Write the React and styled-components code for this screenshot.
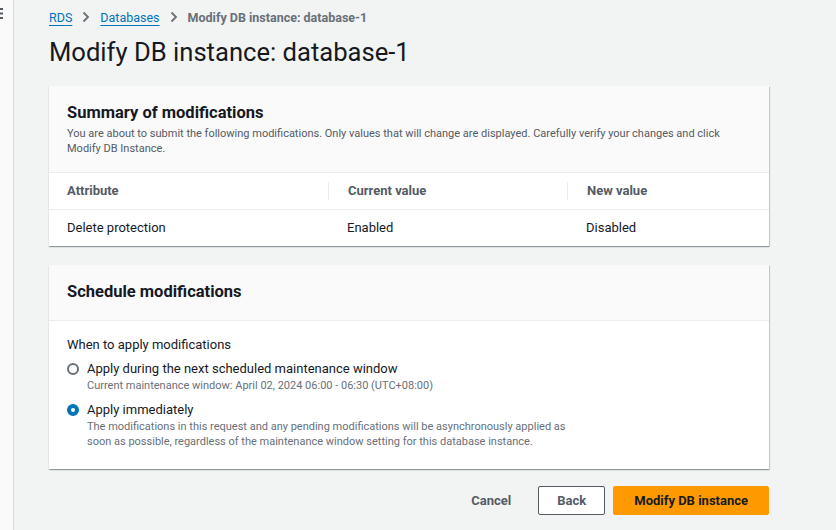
import React, { useState } from "react";
import styled, { createGlobalStyle } from "styled-components";

const GlobalStyle = createGlobalStyle`
	body {
		margin: 0;
		background: #f2f3f3;
		font-family: Roboto, "Liberation Sans", sans-serif;
		color: #16191f;
	}
`;

const Layout = styled.div`
	display: flex;
	min-height: 530px;
`;

const Rail = styled.aside`
	width: 13px;
	border-right: 1px solid #d5dbdb;
	background: #fafafa;
	padding-top: 5px;
	color: #545b64;
`;

const Main = styled.main`
	padding: 8px 0 16px 35px;
	width: 720px;
`;

const Crumbs = styled.nav`
	display: flex;
	align-items: center;
	gap: 10px;
	font-size: 12.5px;
	height: 18px;
`;

const CrumbLink = styled.a`
	color: #0073bb;
	text-decoration: underline;
	text-underline-offset: 3px;
`;

const CrumbCurrent = styled.span`
	color: #687078;
	font-weight: 700;
`;

const Title = styled.h1`
	margin: 10px 0 18px;
	font-size: 25.6px;
	font-weight: 400;
	line-height: 32px;
`;

const Panel = styled.section`
	background: #fff;
	box-shadow: 0 1px 1px 0 rgba(0, 28, 36, 0.3), 1px 1px 1px 0 rgba(0, 28, 36, 0.15);
	margin-bottom: 19px;
`;

const PanelHeader = styled.header`
	background: #fafafa;
	border-bottom: 1px solid #eaeded;
	padding: ${(p) => (p.$compact ? "16px 18px 17px" : "16px 18px 16px")};
`;

const PanelTitle = styled.h2`
	margin: 0;
	font-size: 16.5px;
	font-weight: 700;
	line-height: 22px;
`;

const PanelDesc = styled.p`
	margin: 2px 0 0;
	font-size: 11px;
	line-height: 15px;
	color: #545b64;
`;

const Row = styled.div`
	display: grid;
	grid-template-columns: 279px 239px 1fr;
	height: 36px;
	align-items: center;
	border-bottom: ${(p) => (p.$head ? "1px solid #eaeded" : "none")};
	font-size: 13px;
	font-weight: ${(p) => (p.$head ? 700 : 400)};
	color: ${(p) => (p.$head ? "#545b64" : "#16191f")};
`;

const Cell = styled.div`
	padding-left: ${(p) => (p.$first ? "18px" : "19px")};
	border-left: ${(p) => (p.$head && !p.$first ? "1px solid #eaeded" : "none")};
	line-height: 18px;
`;

const PanelBody = styled.div`
	padding: 15px 18px 20px;
`;

const FieldLabel = styled.div`
	font-size: 13px;
	line-height: 18px;
	margin-bottom: 6px;
`;

const Option = styled.label`
	display: grid;
	grid-template-columns: 20px 1fr;
	margin-bottom: 8px;
	cursor: pointer;

	&:last-child {
		margin-bottom: 0;
	}
`;

const Dot = styled.span`
	width: 12px;
	height: 12px;
	margin-top: 3px;
	border-radius: 50%;
	box-sizing: border-box;
	border: ${(p) => (p.$on ? "4px solid #0073bb" : "2px solid #687078")};
	background: #fff;
`;

const OptionText = styled.span`
	font-size: 13px;
	line-height: 18px;
`;

const OptionHint = styled.span`
	display: block;
	font-size: 11px;
	line-height: 15px;
	color: #687078;
	max-width: 490px;
`;

const Actions = styled.div`
	display: flex;
	justify-content: flex-end;
	align-items: center;
	gap: 8px;
	margin-top: -2px;
`;

const Button = styled.button`
	font-family: inherit;
	font-size: 13px;
	font-weight: 700;
	height: 29px;
	border-radius: 2px;
	padding: 0 ${(p) => (p.$variant === "primary" ? "20px" : "18px")};
	cursor: pointer;
	border: 1px solid
		${(p) => (p.$variant === "primary" ? "#ff9900" : p.$variant === "link" ? "transparent" : "#545b64")};
	background: ${(p) => (p.$variant === "primary" ? "#ff9900" : p.$variant === "link" ? "transparent" : "#fff")};
	color: ${(p) => (p.$variant === "primary" ? "#16191f" : "#545b64")};
`;

const Chevron = () => (
	<svg width="8" height="12" viewBox="0 0 8 12" fill="none">
		<path d="M1.5 1.5 6 6l-4.5 4.5" stroke="#687078" strokeWidth="1.8" />
	</svg>
);

const Dots = () => (
	<svg width="4" height="12" viewBox="0 0 4 12">
		<rect x="0" y="0" width="3" height="2" fill="#545b64" />
		<rect x="0" y="4.5" width="3" height="2" fill="#545b64" />
		<rect x="0" y="9" width="3" height="2" fill="#545b64" />
	</svg>
);

const App = () => {
	const [when, setWhen] = useState("now");

	return (
		<>
			<GlobalStyle />
			<Layout>
				<Rail>
					<Dots />
				</Rail>
				<Main>
					<Crumbs>
						<CrumbLink>RDS</CrumbLink>
						<Chevron />
						<CrumbLink>Databases</CrumbLink>
						<Chevron />
						<CrumbCurrent>Modify DB instance: database-1</CrumbCurrent>
					</Crumbs>
					<Title>Modify DB instance: database-1</Title>

					<Panel>
						<PanelHeader>
							<PanelTitle>Summary of modifications</PanelTitle>
							<PanelDesc>
								You are about to submit the following modifications. Only values that will change are
								displayed. Carefully verify your changes and click Modify DB Instance.
							</PanelDesc>
						</PanelHeader>
						<Row $head>
							<Cell $head $first>Attribute</Cell>
							<Cell $head>Current value</Cell>
							<Cell $head>New value</Cell>
						</Row>
						<Row>
							<Cell $first>Delete protection</Cell>
							<Cell>Enabled</Cell>
							<Cell>Disabled</Cell>
						</Row>
					</Panel>

					<Panel>
						<PanelHeader $compact>
							<PanelTitle>Schedule modifications</PanelTitle>
						</PanelHeader>
						<PanelBody>
							<FieldLabel>When to apply modifications</FieldLabel>
							<Option onClick={() => setWhen("window")}>
								<Dot $on={when === "window"} />
								<OptionText>
									Apply during the next scheduled maintenance window
									<OptionHint>Current maintenance window: April 02, 2024 06:00 - 06:30 (UTC+08:00)</OptionHint>
								</OptionText>
							</Option>
							<Option onClick={() => setWhen("now")}>
								<Dot $on={when === "now"} />
								<OptionText>
									Apply immediately
									<OptionHint>
										The modifications in this request and any pending modifications will be asynchronously
										applied as soon as possible, regardless of the maintenance window setting for this
										database instance.
									</OptionHint>
								</OptionText>
							</Option>
						</PanelBody>
					</Panel>

					<Actions>
						<Button $variant="link">Cancel</Button>
						<Button>Back</Button>
						<Button $variant="primary">Modify DB instance</Button>
					</Actions>
				</Main>
			</Layout>
		</>
	);
};

export default App;
